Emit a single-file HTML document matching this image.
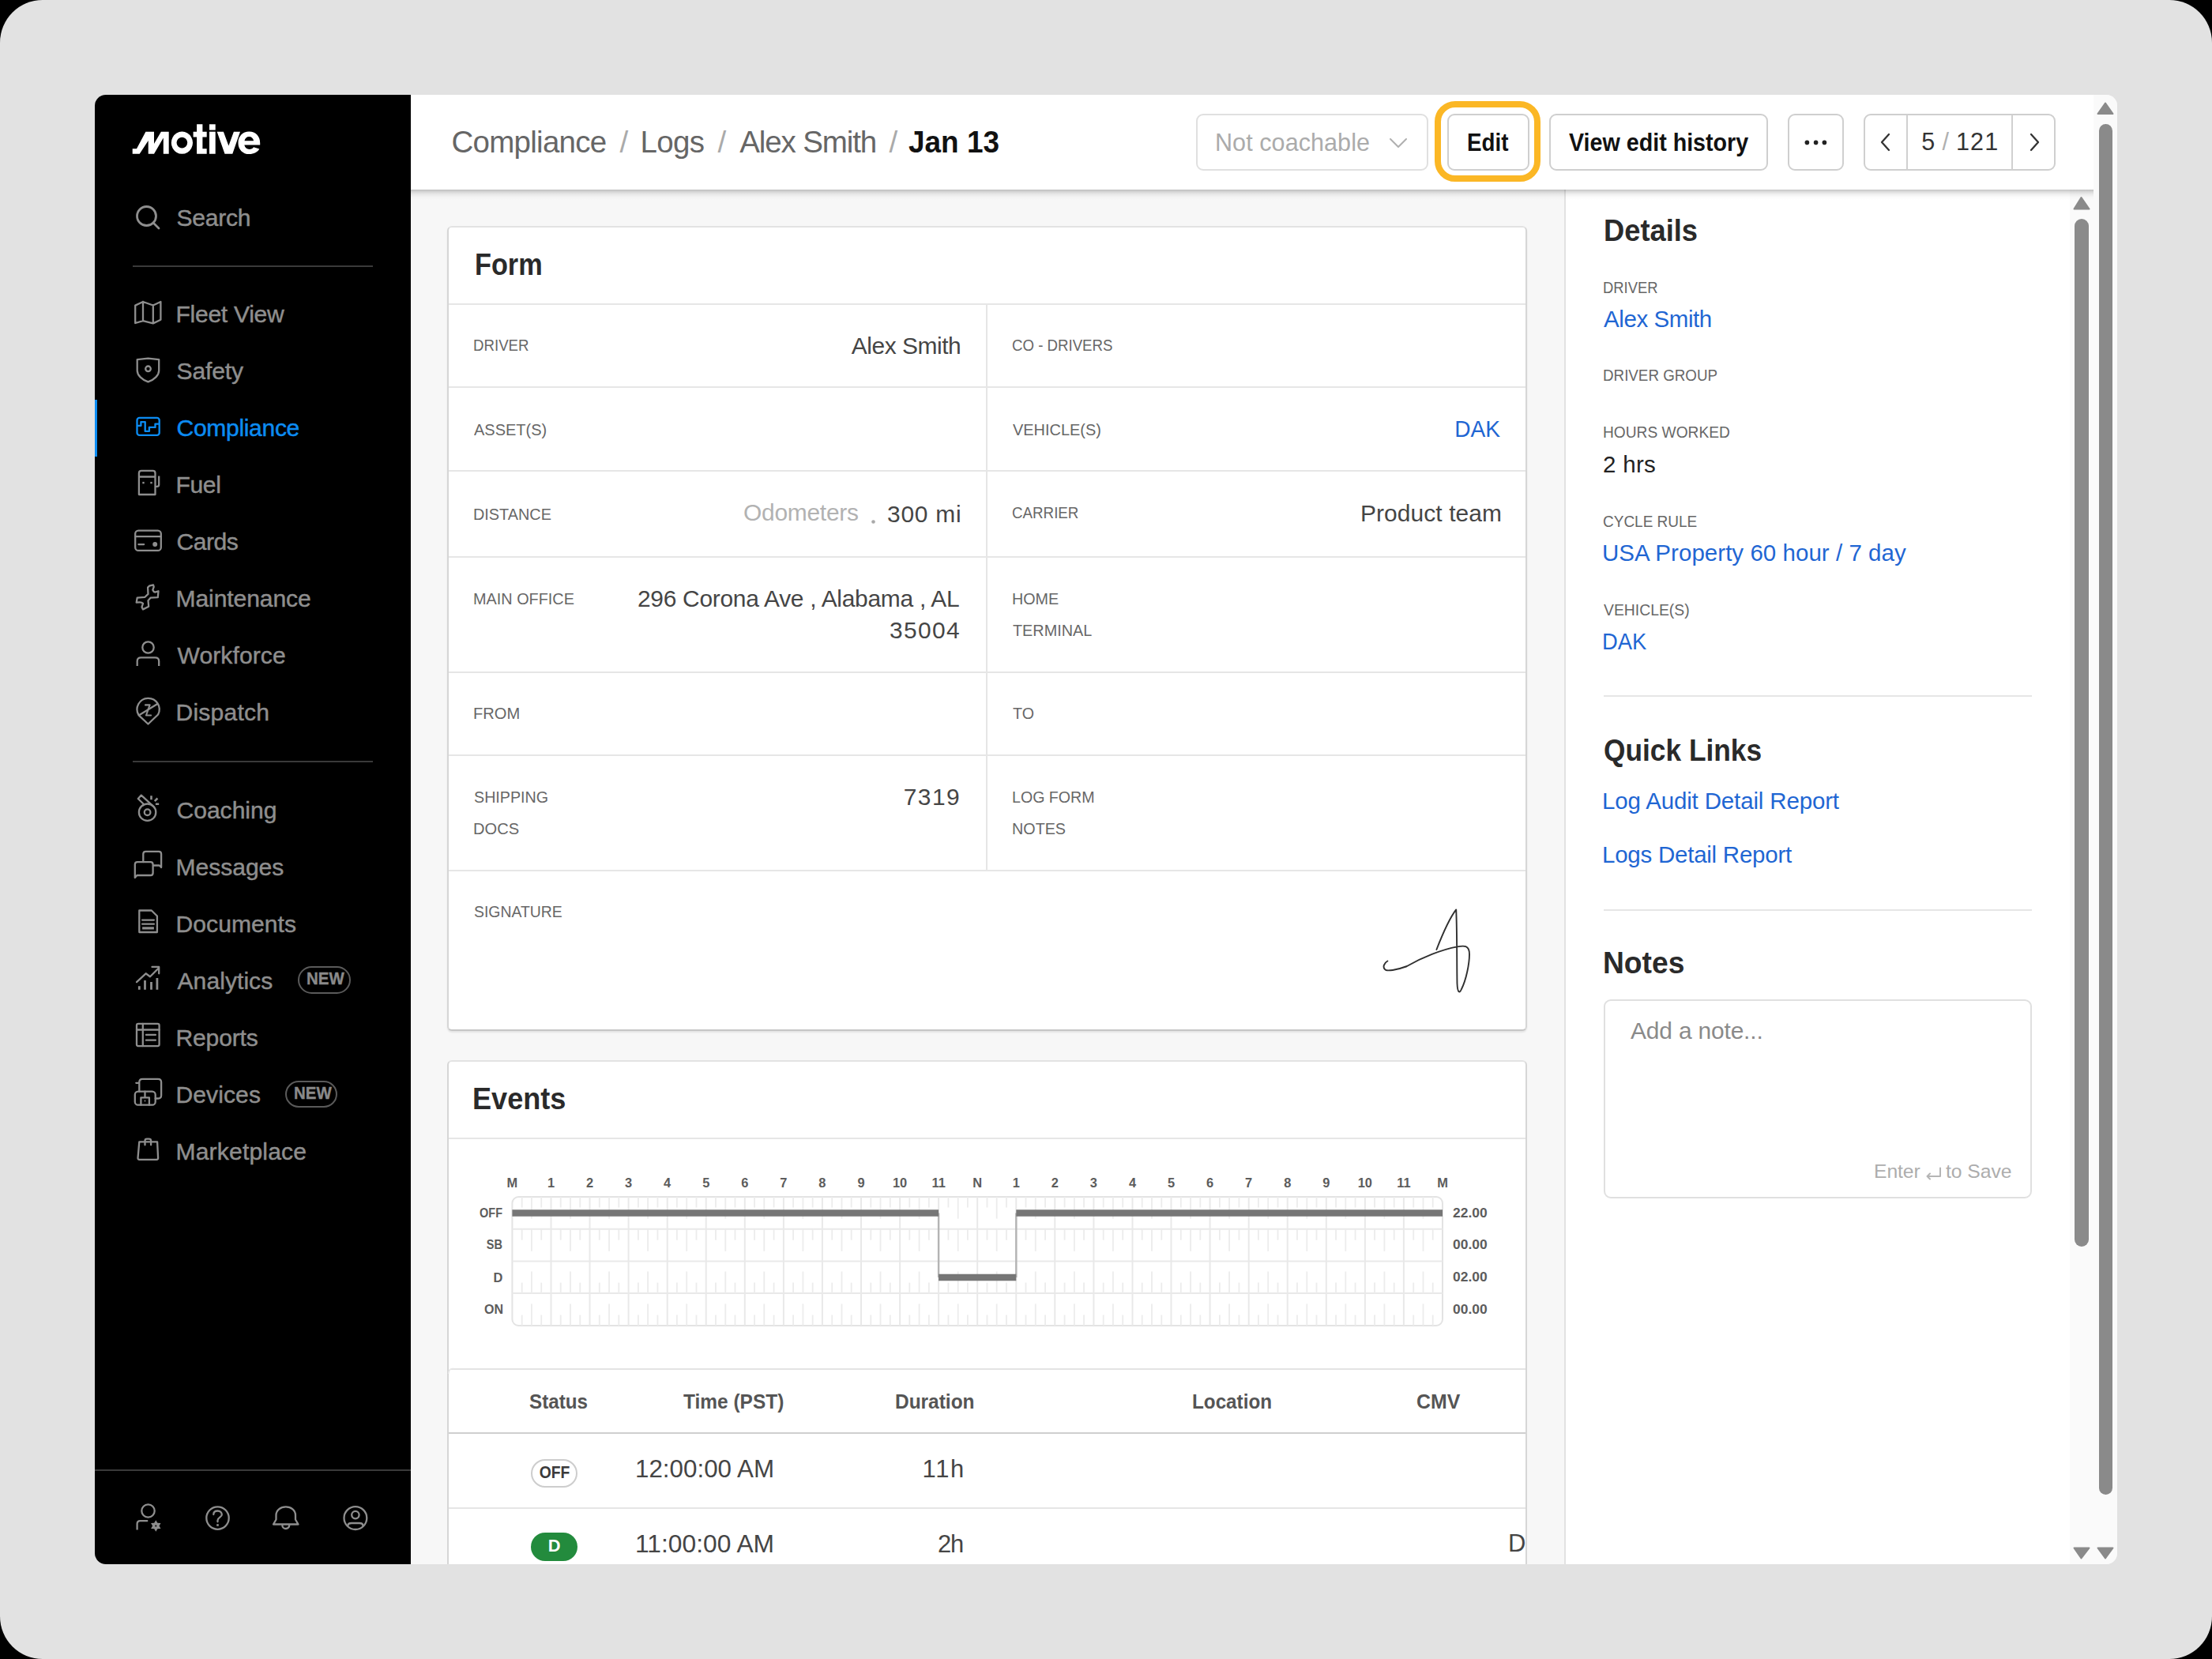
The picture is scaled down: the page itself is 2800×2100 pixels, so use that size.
<!DOCTYPE html><html><head><meta charset="utf-8"><style>html,body{margin:0;padding:0;background:#000;width:2800px;height:2100px;overflow:hidden;font-family:"Liberation Sans", sans-serif}</style></head><body>
<div style="position:absolute;left:0;top:0;width:2800px;height:2100px;background:#e2e2e2;border-radius:54px"></div>
<div style="position:absolute;left:120px;top:120px;width:2560px;height:1860px;border-radius:14px;overflow:hidden;background:#f7f7f7">
<div style="position:absolute;left:-120px;top:-120px;width:2800px;height:2100px">
<div style="position:absolute;left:120.0px;top:120.0px;width:400.0px;height:1860.0px;background:#000"></div>
<div style="position:absolute;left:520.0px;top:240.0px;width:1460.0px;height:1740.0px;background:#f7f7f7"></div>
<div style="position:absolute;left:1980.0px;top:240.0px;width:640.0px;height:1740.0px;background:#fff;border-left:2px solid #e2e2e2;box-sizing:border-box"></div>
<div style="position:absolute;left:2620.0px;top:240.0px;width:30.0px;height:1740.0px;background:#fafafa"></div>
<div style="position:absolute;left:2650.0px;top:120.0px;width:30.0px;height:1860.0px;background:#fafafa"></div>
<div style="position:absolute;left:520.0px;top:120.0px;width:2130.0px;height:120.0px;background:#fff"></div>
<div style="position:absolute;left:520.0px;top:240.0px;width:2130.0px;height:13.0px;background:linear-gradient(to bottom, rgba(0,0,0,0.24) 0px, rgba(0,0,0,0.16) 2px, rgba(0,0,0,0.10) 4px, rgba(0,0,0,0.05) 6.5px, rgba(0,0,0,0.015) 9.5px, rgba(0,0,0,0) 13px)"></div>
<svg style="position:absolute;left:0;top:0" width="400" height="260" viewBox="0 0 400 260"><path fill="#fff" d="M167.7,194.75 L167.7,188.2 L173.0,188.2 L184.4,166.7 L195.0,166.7 L195.0,182.1 L203.9,166.7 L213.7,166.7 L213.7,194.75 L206.8,194.75 L206.8,174.4 L195.0,194.75 L187.7,194.75 L187.7,177.9 L176.7,194.75 Z"/><path fill="#fff" fill-rule="evenodd" d="M230.4,166.6 A13.6,14.1 0 1,0 230.41,166.6 Z M230.4,173.7 A6.8,6.9 0 1,1 230.39,173.7 Z"/><path fill="#fff" d="M249.1,157.3 L256.4,157.3 L256.4,166.7 L261.7,166.7 L261.7,173.6 L256.4,173.6 L256.4,188.2 L261.7,188.2 L261.7,194.75 L249.1,194.75 L249.1,173.6 L244.6,173.6 L244.6,166.7 L249.1,166.7 Z"/><rect fill="#fff" x="265" y="157.3" width="7.7" height="7.3"/><rect fill="#fff" x="265" y="166.7" width="7.7" height="28.05"/><path fill="#fff" d="M274.7,166.7 L282.9,166.7 L289.4,184.6 L295.9,166.7 L304.0,166.7 L294.3,194.75 L284.5,194.75 Z"/><path fill="#fff" fill-rule="evenodd" d="M315.3,166.6 C323.6,166.6 329.2,172.6 329.2,181.0 L329.2,183.6 L309.3,183.6 C310.0,187.0 312.6,189.0 315.6,189.0 C318.0,189.0 319.9,188.0 321.0,186.3 L328.3,188.6 C326.2,192.6 321.3,195.1 315.5,195.1 C307.3,195.1 301.5,189.1 301.5,180.9 C301.5,172.6 307.3,166.6 315.3,166.6 Z M309.5,178.2 L321.1,178.2 C320.5,175.1 318.3,173.1 315.3,173.1 C312.3,173.1 310.2,175.1 309.5,178.2 Z"/></svg>
<svg style="position:absolute;left:160.0px;top:250.0px;" width="50" height="50" viewBox="0 0 50 50" fill="none"><circle cx="25.5" cy="23.5" r="12" stroke="#8e8e8e" stroke-width="2.8"/><path d="M34 32 L41 39" stroke="#8e8e8e" stroke-width="2.8" stroke-linecap="round"/></svg>
<div style="position:absolute;left:167.5px;top:335.5px;width:304.5px;height:2.0px;background:#3a3a3a"></div>
<div style="position:absolute;left:167.5px;top:962.8px;width:304.5px;height:2.0px;background:#3a3a3a"></div>
<div style="position:absolute;left:120.0px;top:506.0px;width:3.0px;height:72.0px;background:#0c8cf2"></div>
<div style="position:absolute;left:377.0px;top:1223.0px;width:67.0px;height:35.0px;border:2px solid #5a5a5a;border-radius:18px;box-sizing:border-box"></div>
<div style="position:absolute;left:361.4px;top:1367.7px;width:66.0px;height:34.0px;border:2px solid #5a5a5a;border-radius:18px;box-sizing:border-box"></div>
<svg style="position:absolute;left:0;top:0" width="600" height="2000" viewBox="0 0 600 2000" fill="none"><g stroke="#8e8e8e" stroke-width="2.3" stroke-linejoin="round" stroke-linecap="round" fill="none"><path d="M171.2,386.6 L181,382 L193.8,386.5 L203.4,382 L203.4,404.7 L193.8,409.4 L181,406.2 L171.2,409 Z M181,382 L181,406.2 M193.8,386.5 L193.8,409.4"/><path d="M187.5,453.6 L201.2,455.2 L201.2,469 C201.2,475 195.5,480.5 187.5,483.4 C179.5,480.5 173.7,475 173.7,469 L173.7,455.2 Z"/><circle cx="187.5" cy="466.8" r="3.3"/><path d="M175.9,626 L175.9,598.9 C175.9,597 177,595.9 179,595.9 L193.5,595.9 C195.5,595.9 196.5,597 196.5,598.9 L196.5,626 Z M175.9,603.5 L196.5,603.5 M196.5,615.8 L199,615.8 C200.5,615.8 201.2,615 201.2,613.5 L201.2,602.4" stroke-linecap="butt"/><rect x="180.3" y="609.9" width="2.4" height="2.4" fill="#8e8e8e" stroke="none"/><rect x="190.3" y="609.9" width="2.4" height="2.4" fill="#8e8e8e" stroke="none"/><rect x="171.2" y="671.6" width="32.6" height="25.3" rx="4"/><path d="M171.2,679.1 L203.8,679.1 M175.4,689.1 L182.2,689.1"/><circle cx="196.2" cy="689.1" r="3" fill="#8e8e8e" stroke="none"/><path d="M194,740.3 L194.7,742.8 L193.3,746.8 C194,748.5 195,749.5 196.2,749.7 L200.5,748.3 L199.8,756.2 L190.7,756.6 L187.5,760.2 L188.2,767.8 L181,771.4 L179.5,768.5 L181,763.8 C180,762.8 178.5,762.3 176.6,762.4 L172.7,762.7 L173.7,756.6 L183.5,755.8 L187.5,751.9 L187.1,743.6 L188.9,741.7 Z"/><circle cx="187.5" cy="819.5" r="7.2"/><path d="M173.7,843 L173.7,837 C173.7,834 175.5,832.4 178.5,832.4 L196.4,832.4 C199.4,832.4 201.2,834 201.2,837 L201.2,843" stroke-linecap="butt"/><path d="M187.5,916.5 L175.6,905.3 A14.1,14.1 0 1,1 200.1,904.5 Z M176.5,905.1 L198.5,891.5"/><path d="M184,892.4 L189.6,892.4 L185,905.5 L191.1,905.5" stroke-width="2.1"/><circle cx="186.6" cy="1028.2" r="10.7"/><circle cx="186.6" cy="1028.2" r="3.8"/><path d="M181.5,1019.3 L182,1018 L174.8,1011 L178.8,1006.6 L194.4,1021"/><path d="M191.5,1007.2 L191.5,1012.3 M195.8,1014.1 L199.4,1010.5 M196.9,1017.7 L201.2,1017.7" stroke-width="2.6" stroke-linecap="butt"/><path d="M181.3,1091.1 L181.3,1080.9 C181.3,1078.8 182.3,1077.8 184.5,1077.8 L201,1077.8 C203.1,1077.8 204.1,1078.8 204.1,1080.9 L204.1,1098 L201.8,1095.5 L194.4,1095.5"/><path d="M170.8,1111 L170.8,1094.2 C170.8,1092.1 171.8,1091.1 173.9,1091.1 L190.5,1091.1 C192.6,1091.1 193.6,1092.1 193.6,1094.2 L193.6,1104.9 C193.6,1107 192.6,1108 190.5,1108 L173.4,1108 Z"/><path d="M176.3,1180 L176.3,1152.5 L191.8,1152.5 L198.9,1159.5 L198.9,1180 Z M180.1,1164.6 L194.9,1164.6 M180.1,1169.7 L194.9,1169.7"/><path d="M180.1,1174.9 L194.9,1174.9" stroke-width="3.2" stroke-linecap="butt"/><path d="M173,1243.1 L184.6,1232.3 L190,1236.2 L200.9,1225.4 M192.5,1223.9 L201.2,1223.9 L201.2,1232.3"/><path d="M176.3,1248.2 L176.3,1252.8 M183.5,1240.9 L183.5,1252.8 M191.5,1243.1 L191.5,1252.8 M198.9,1238 L198.9,1252.8" stroke-width="2.8" stroke-linecap="butt"/><rect x="173" y="1295.9" width="28.6" height="28.2" rx="2"/><path d="M173,1303.5 L201.6,1303.5 M180.8,1295.9 L180.8,1324.1 M185,1309.9 L196.9,1309.9 M185,1316.7 L196.9,1316.7"/><path d="M172.3,1370.8 L176.3,1370.8 M176.3,1381.7 L176.3,1369.8 C176.3,1367.3 177.8,1365.8 180.3,1365.8 L200.1,1365.8 C202.6,1365.8 204.1,1367.3 204.1,1369.8 L204.1,1386.5 C204.1,1389 202.6,1390.5 200.1,1390.5 L196.7,1390.5"/><rect x="170.8" y="1381.7" width="25.9" height="17" rx="4"/><path d="M178.4,1398.7 L178.4,1389.3 L188.9,1389.3 L188.9,1398.7 M183.5,1381.7 L183.5,1389.3"/><circle cx="183.5" cy="1393.5" r="0.9" fill="#8e8e8e" stroke="none"/><path d="M176.3,1445.4 L199.1,1445.4 L200.1,1465.8 C200.1,1467 199.4,1467.8 198.3,1467.8 L176.3,1467.8 C175.2,1467.8 174.5,1467 174.5,1465.8 Z M183.5,1449.3 L183.5,1444 C183.5,1442.5 184.5,1441.7 186,1441.7 L188.6,1441.7 C190.1,1441.7 191.1,1442.5 191.1,1444 L191.1,1449.3"/></g><g stroke="#0c8cf2" stroke-width="2.35" stroke-linejoin="round" fill="none"><rect x="173.5" y="528.9" width="28.2" height="22" rx="3"/><path d="M173.5,538.8 L178.4,538.8 L178.4,534.1 L183.7,534.1 L183.7,545.8 L188.9,545.8 L188.9,540.9 L196.5,540.9 L196.5,536.6 L201.7,536.6"/></g></svg>
<div style="position:absolute;left:120.0px;top:1860.0px;width:400.0px;height:2.0px;background:#3a3a3a"></div>
<svg style="position:absolute;left:0;top:0" width="600" height="2000" viewBox="0 0 600 2000" fill="none"><g stroke="#8e8e8e" stroke-width="2.3" stroke-linecap="round" stroke-linejoin="round" fill="none"><circle cx="187.5" cy="1912.5" r="8.2"/><path d="M173.6,1936.5 L173.6,1929 C173.6,1926.5 175,1925.1 177.5,1925.1 L187.2,1925.1" stroke-linecap="butt"/><circle cx="197.3" cy="1931.5" r="2.2"/></g><path fill-rule="evenodd" fill="#8e8e8e" d="M197.30,1924.30 L195.20,1927.86 L191.06,1927.90 L193.10,1931.50 L191.06,1935.10 L195.20,1935.14 L197.30,1938.70 L199.40,1935.14 L203.54,1935.10 L201.50,1931.50 L203.54,1927.90 L199.40,1927.86 Z M199.3,1931.5 A2,2 0 1,0 195.3,1931.5 A2,2 0 1,0 199.3,1931.5 Z"/><g stroke="#8e8e8e" stroke-width="2.3" stroke-linecap="round" stroke-linejoin="round" fill="none"><circle cx="275.5" cy="1921.6" r="14.2"/><path d="M270.3,1917 C270.3,1914.2 272.5,1912.5 275.5,1912.5 C278.7,1912.5 280.8,1914.5 280.8,1917.2 C280.8,1920.5 275.5,1920.8 275.5,1924.5 L275.5,1926.3"/><path d="M346,1929.5 L349.5,1923.5 L349.5,1918 C349.5,1911.5 355,1907.4 361.8,1907.4 C368.6,1907.4 374,1911.5 374,1918 L374,1923.5 L377.5,1929.5 Z M357.3,1930.5 A4.5,4.5 0 0,0 366.3,1930.5"/><circle cx="449.9" cy="1921.6" r="14.4"/><circle cx="449.9" cy="1917.6" r="4.7"/><path d="M440.5,1931 C440.5,1929 442.5,1928 445,1928 L455,1928 C457.5,1928 459.3,1929 459.3,1931"/></g><rect x="274.2" y="1929.2" width="2.6" height="2.6" fill="#8e8e8e"/></svg>
<div style="position:absolute;left:1514.0px;top:144.0px;width:294.0px;height:72.0px;background:#fff;border:2px solid #e0e0e0;border-radius:9px;box-sizing:border-box"></div>
<svg style="position:absolute;left:1755.0px;top:170.0px;" width="30" height="24" viewBox="0 0 30 24" fill="none"><path d="M5,6 L15,16 L25,6" stroke="#b0b0b0" stroke-width="2" stroke-linecap="round" stroke-linejoin="round"/></svg>
<div style="position:absolute;left:1832.0px;top:144.0px;width:104.0px;height:72.0px;background:#fff;border:2px solid #cfcfcf;border-radius:9px;box-sizing:border-box"></div>
<div style="position:absolute;left:1816.0px;top:128.0px;width:134.0px;height:102.0px;border:8px solid #fbb725;border-radius:26px;box-sizing:border-box"></div>
<div style="position:absolute;left:1961.0px;top:144.0px;width:277.0px;height:72.0px;background:#fff;border:2px solid #cfcfcf;border-radius:9px;box-sizing:border-box"></div>
<div style="position:absolute;left:2263.0px;top:144.0px;width:71.0px;height:72.0px;background:#fff;border:2px solid #cfcfcf;border-radius:9px;box-sizing:border-box"></div>
<svg style="position:absolute;left:2270.0px;top:170.0px;" width="60" height="20" viewBox="0 0 60 20" fill="none"><circle cx="17.4" cy="10.4" r="2.8" fill="#222"/><circle cx="28.6" cy="10.4" r="2.8" fill="#222"/><circle cx="39.4" cy="10.4" r="2.8" fill="#222"/></svg>
<div style="position:absolute;left:2359.0px;top:144.0px;width:243.0px;height:72.0px;background:#fff;border:2px solid #cfcfcf;border-radius:9px;box-sizing:border-box"></div>
<div style="position:absolute;left:2413.0px;top:145.0px;width:2.0px;height:70.0px;background:#d0d0d0"></div>
<div style="position:absolute;left:2546.0px;top:145.0px;width:2.0px;height:70.0px;background:#d0d0d0"></div>
<svg style="position:absolute;left:2375.0px;top:165.0px;" width="30" height="30" viewBox="0 0 30 30" fill="none"><path d="M16,5 L7,15 L16,25" stroke="#333" stroke-width="2.3" stroke-linecap="round" stroke-linejoin="round"/></svg>
<svg style="position:absolute;left:2562.0px;top:165.0px;" width="30" height="30" viewBox="0 0 30 30" fill="none"><path d="M9,5 L18,15 L9,25" stroke="#333" stroke-width="2.3" stroke-linecap="round" stroke-linejoin="round"/></svg>
<svg style="position:absolute;left:2620.0px;top:240.0px;" width="30" height="40" viewBox="0 0 30 40" fill="none"><path d="M5.5,24.5 L14.5,10 L24.5,24.5 Z" fill="#8a8a8a" stroke="#8a8a8a" stroke-width="2" stroke-linejoin="round"/></svg>
<div style="position:absolute;left:2626.0px;top:277.0px;width:18.0px;height:1301.0px;background:#8a8a8a;border-radius:9px"></div>
<svg style="position:absolute;left:2620.0px;top:1950.0px;" width="30" height="30" viewBox="0 0 30 30" fill="none"><path d="M5.5,9.5 L14.5,22.5 L24.5,9.5 Z" fill="#8a8a8a" stroke="#8a8a8a" stroke-width="2" stroke-linejoin="round"/></svg>
<svg style="position:absolute;left:2650.0px;top:120.0px;" width="30" height="40" viewBox="0 0 30 40" fill="none"><path d="M5.5,24 L15,10.5 L24.5,24 Z" fill="#8a8a8a" stroke="#8a8a8a" stroke-width="2" stroke-linejoin="round"/></svg>
<div style="position:absolute;left:2656.5px;top:157.0px;width:17.5px;height:1735.0px;background:#8a8a8a;border-radius:9px"></div>
<svg style="position:absolute;left:2650.0px;top:1950.0px;" width="30" height="30" viewBox="0 0 30 30" fill="none"><path d="M5.5,9.5 L15,22.5 L24.5,9.5 Z" fill="#8a8a8a" stroke="#8a8a8a" stroke-width="2" stroke-linejoin="round"/></svg>
<div style="position:absolute;left:565.5px;top:286.0px;width:1367.0px;height:1019.0px;background:#fff;border:2px solid #d6d6d6;border-top-color:#e3e3e3;border-bottom-color:#c6c6c6;border-radius:6px;box-sizing:border-box;box-shadow:0 2px 2px rgba(0,0,0,0.08)"></div>
<div style="position:absolute;left:568.0px;top:384.0px;width:1363.0px;height:2.0px;background:#e6e6e6"></div>
<div style="position:absolute;left:568.0px;top:489.0px;width:1363.0px;height:2.0px;background:#e6e6e6"></div>
<div style="position:absolute;left:568.0px;top:595.0px;width:1363.0px;height:2.0px;background:#e6e6e6"></div>
<div style="position:absolute;left:568.0px;top:704.0px;width:1363.0px;height:2.0px;background:#e6e6e6"></div>
<div style="position:absolute;left:568.0px;top:850.0px;width:1363.0px;height:2.0px;background:#e6e6e6"></div>
<div style="position:absolute;left:568.0px;top:955.0px;width:1363.0px;height:2.0px;background:#e6e6e6"></div>
<div style="position:absolute;left:568.0px;top:1101.0px;width:1363.0px;height:2.0px;background:#e6e6e6"></div>
<div style="position:absolute;left:1247.5px;top:385.0px;width:2.0px;height:717.0px;background:#e6e6e6"></div>
<svg style="position:absolute;left:1098.0px;top:654.0px;" width="15" height="15" viewBox="0 0 15 15" fill="none"><circle cx="7.5" cy="6.5" r="2.3" fill="#a9a9a9"/></svg>
<svg style="position:absolute;left:1740.0px;top:1140.0px;" width="130" height="125" viewBox="0 0 130 125" fill="none"><path d="M78.4,62 C85,45 95,22 103.2,11.4 C104.5,40 104,80 104.5,105 C105,118 108,117 110,112 C116,100 120,80 120,68 C120,56 113,57 104.7,58.4 C85,62 60,72 41,83 C28,88 15,90 13,87 C10,84 12,79 16.4,76.5" stroke="#2f2f2f" stroke-width="1.9" stroke-linecap="round" stroke-linejoin="round"/></svg>
<div style="position:absolute;left:565.5px;top:1342.0px;width:1367.0px;height:698.0px;background:#fff;border:2px solid #d6d6d6;border-top-color:#e3e3e3;border-radius:6px;box-sizing:border-box"></div>
<div style="position:absolute;left:568.0px;top:1440.0px;width:1363.0px;height:2.0px;background:#e6e6e6"></div>
<svg style="position:absolute;left:0;top:0" width="2000" height="2000" viewBox="0 0 2000 2000" fill="none"><rect x="648.4" y="1515.0" width="1177.6" height="163.0" rx="8" stroke="#e3e3e3" stroke-width="2"/><path d="M648.4,1555.7 L1826.0,1555.7" stroke="#e9e9e9" stroke-width="2"/><path d="M648.4,1596.4 L1826.0,1596.4" stroke="#e9e9e9" stroke-width="2"/><path d="M648.4,1637.1 L1826.0,1637.1" stroke="#e9e9e9" stroke-width="2"/><path d="M697.5,1515.0 L697.5,1678.0" stroke="#e9e9e9" stroke-width="2"/><path d="M746.5,1515.0 L746.5,1678.0" stroke="#e9e9e9" stroke-width="2"/><path d="M795.6,1515.0 L795.6,1678.0" stroke="#e9e9e9" stroke-width="2"/><path d="M844.7,1515.0 L844.7,1678.0" stroke="#e9e9e9" stroke-width="2"/><path d="M893.7,1515.0 L893.7,1678.0" stroke="#e9e9e9" stroke-width="2"/><path d="M942.8,1515.0 L942.8,1678.0" stroke="#e9e9e9" stroke-width="2"/><path d="M991.9,1515.0 L991.9,1678.0" stroke="#e9e9e9" stroke-width="2"/><path d="M1040.9,1515.0 L1040.9,1678.0" stroke="#e9e9e9" stroke-width="2"/><path d="M1090.0,1515.0 L1090.0,1678.0" stroke="#e9e9e9" stroke-width="2"/><path d="M1139.1,1515.0 L1139.1,1678.0" stroke="#e9e9e9" stroke-width="2"/><path d="M1188.1,1515.0 L1188.1,1678.0" stroke="#e9e9e9" stroke-width="2"/><path d="M1237.2,1515.0 L1237.2,1678.0" stroke="#e9e9e9" stroke-width="2"/><path d="M1286.3,1515.0 L1286.3,1678.0" stroke="#e9e9e9" stroke-width="2"/><path d="M1335.3,1515.0 L1335.3,1678.0" stroke="#e9e9e9" stroke-width="2"/><path d="M1384.4,1515.0 L1384.4,1678.0" stroke="#e9e9e9" stroke-width="2"/><path d="M1433.5,1515.0 L1433.5,1678.0" stroke="#e9e9e9" stroke-width="2"/><path d="M1482.5,1515.0 L1482.5,1678.0" stroke="#e9e9e9" stroke-width="2"/><path d="M1531.6,1515.0 L1531.6,1678.0" stroke="#e9e9e9" stroke-width="2"/><path d="M1580.7,1515.0 L1580.7,1678.0" stroke="#e9e9e9" stroke-width="2"/><path d="M1629.7,1515.0 L1629.7,1678.0" stroke="#e9e9e9" stroke-width="2"/><path d="M1678.8,1515.0 L1678.8,1678.0" stroke="#e9e9e9" stroke-width="2"/><path d="M1727.9,1515.0 L1727.9,1678.0" stroke="#e9e9e9" stroke-width="2"/><path d="M1776.9,1515.0 L1776.9,1678.0" stroke="#e9e9e9" stroke-width="2"/><path d="M660.7,1515.0 L660.7,1528.5" stroke="#ececec" stroke-width="1.8"/><path d="M660.7,1555.7 L660.7,1569.7" stroke="#ececec" stroke-width="1.8"/><path d="M660.7,1623.6 L660.7,1637.1" stroke="#ececec" stroke-width="1.8"/><path d="M660.7,1664.5 L660.7,1678.0" stroke="#ececec" stroke-width="1.8"/><path d="M672.9,1515.0 L672.9,1542.6" stroke="#ececec" stroke-width="1.8"/><path d="M672.9,1555.7 L672.9,1583.8" stroke="#ececec" stroke-width="1.8"/><path d="M672.9,1609.5 L672.9,1637.1" stroke="#ececec" stroke-width="1.8"/><path d="M672.9,1650.4 L672.9,1678.0" stroke="#ececec" stroke-width="1.8"/><path d="M685.2,1515.0 L685.2,1528.5" stroke="#ececec" stroke-width="1.8"/><path d="M685.2,1555.7 L685.2,1569.7" stroke="#ececec" stroke-width="1.8"/><path d="M685.2,1623.6 L685.2,1637.1" stroke="#ececec" stroke-width="1.8"/><path d="M685.2,1664.5 L685.2,1678.0" stroke="#ececec" stroke-width="1.8"/><path d="M709.7,1515.0 L709.7,1528.5" stroke="#ececec" stroke-width="1.8"/><path d="M709.7,1555.7 L709.7,1569.7" stroke="#ececec" stroke-width="1.8"/><path d="M709.7,1623.6 L709.7,1637.1" stroke="#ececec" stroke-width="1.8"/><path d="M709.7,1664.5 L709.7,1678.0" stroke="#ececec" stroke-width="1.8"/><path d="M722.0,1515.0 L722.0,1542.6" stroke="#ececec" stroke-width="1.8"/><path d="M722.0,1555.7 L722.0,1583.8" stroke="#ececec" stroke-width="1.8"/><path d="M722.0,1609.5 L722.0,1637.1" stroke="#ececec" stroke-width="1.8"/><path d="M722.0,1650.4 L722.0,1678.0" stroke="#ececec" stroke-width="1.8"/><path d="M734.3,1515.0 L734.3,1528.5" stroke="#ececec" stroke-width="1.8"/><path d="M734.3,1555.7 L734.3,1569.7" stroke="#ececec" stroke-width="1.8"/><path d="M734.3,1623.6 L734.3,1637.1" stroke="#ececec" stroke-width="1.8"/><path d="M734.3,1664.5 L734.3,1678.0" stroke="#ececec" stroke-width="1.8"/><path d="M758.8,1515.0 L758.8,1528.5" stroke="#ececec" stroke-width="1.8"/><path d="M758.8,1555.7 L758.8,1569.7" stroke="#ececec" stroke-width="1.8"/><path d="M758.8,1623.6 L758.8,1637.1" stroke="#ececec" stroke-width="1.8"/><path d="M758.8,1664.5 L758.8,1678.0" stroke="#ececec" stroke-width="1.8"/><path d="M771.1,1515.0 L771.1,1542.6" stroke="#ececec" stroke-width="1.8"/><path d="M771.1,1555.7 L771.1,1583.8" stroke="#ececec" stroke-width="1.8"/><path d="M771.1,1609.5 L771.1,1637.1" stroke="#ececec" stroke-width="1.8"/><path d="M771.1,1650.4 L771.1,1678.0" stroke="#ececec" stroke-width="1.8"/><path d="M783.3,1515.0 L783.3,1528.5" stroke="#ececec" stroke-width="1.8"/><path d="M783.3,1555.7 L783.3,1569.7" stroke="#ececec" stroke-width="1.8"/><path d="M783.3,1623.6 L783.3,1637.1" stroke="#ececec" stroke-width="1.8"/><path d="M783.3,1664.5 L783.3,1678.0" stroke="#ececec" stroke-width="1.8"/><path d="M807.9,1515.0 L807.9,1528.5" stroke="#ececec" stroke-width="1.8"/><path d="M807.9,1555.7 L807.9,1569.7" stroke="#ececec" stroke-width="1.8"/><path d="M807.9,1623.6 L807.9,1637.1" stroke="#ececec" stroke-width="1.8"/><path d="M807.9,1664.5 L807.9,1678.0" stroke="#ececec" stroke-width="1.8"/><path d="M820.1,1515.0 L820.1,1542.6" stroke="#ececec" stroke-width="1.8"/><path d="M820.1,1555.7 L820.1,1583.8" stroke="#ececec" stroke-width="1.8"/><path d="M820.1,1609.5 L820.1,1637.1" stroke="#ececec" stroke-width="1.8"/><path d="M820.1,1650.4 L820.1,1678.0" stroke="#ececec" stroke-width="1.8"/><path d="M832.4,1515.0 L832.4,1528.5" stroke="#ececec" stroke-width="1.8"/><path d="M832.4,1555.7 L832.4,1569.7" stroke="#ececec" stroke-width="1.8"/><path d="M832.4,1623.6 L832.4,1637.1" stroke="#ececec" stroke-width="1.8"/><path d="M832.4,1664.5 L832.4,1678.0" stroke="#ececec" stroke-width="1.8"/><path d="M856.9,1515.0 L856.9,1528.5" stroke="#ececec" stroke-width="1.8"/><path d="M856.9,1555.7 L856.9,1569.7" stroke="#ececec" stroke-width="1.8"/><path d="M856.9,1623.6 L856.9,1637.1" stroke="#ececec" stroke-width="1.8"/><path d="M856.9,1664.5 L856.9,1678.0" stroke="#ececec" stroke-width="1.8"/><path d="M869.2,1515.0 L869.2,1542.6" stroke="#ececec" stroke-width="1.8"/><path d="M869.2,1555.7 L869.2,1583.8" stroke="#ececec" stroke-width="1.8"/><path d="M869.2,1609.5 L869.2,1637.1" stroke="#ececec" stroke-width="1.8"/><path d="M869.2,1650.4 L869.2,1678.0" stroke="#ececec" stroke-width="1.8"/><path d="M881.5,1515.0 L881.5,1528.5" stroke="#ececec" stroke-width="1.8"/><path d="M881.5,1555.7 L881.5,1569.7" stroke="#ececec" stroke-width="1.8"/><path d="M881.5,1623.6 L881.5,1637.1" stroke="#ececec" stroke-width="1.8"/><path d="M881.5,1664.5 L881.5,1678.0" stroke="#ececec" stroke-width="1.8"/><path d="M906.0,1515.0 L906.0,1528.5" stroke="#ececec" stroke-width="1.8"/><path d="M906.0,1555.7 L906.0,1569.7" stroke="#ececec" stroke-width="1.8"/><path d="M906.0,1623.6 L906.0,1637.1" stroke="#ececec" stroke-width="1.8"/><path d="M906.0,1664.5 L906.0,1678.0" stroke="#ececec" stroke-width="1.8"/><path d="M918.3,1515.0 L918.3,1542.6" stroke="#ececec" stroke-width="1.8"/><path d="M918.3,1555.7 L918.3,1583.8" stroke="#ececec" stroke-width="1.8"/><path d="M918.3,1609.5 L918.3,1637.1" stroke="#ececec" stroke-width="1.8"/><path d="M918.3,1650.4 L918.3,1678.0" stroke="#ececec" stroke-width="1.8"/><path d="M930.5,1515.0 L930.5,1528.5" stroke="#ececec" stroke-width="1.8"/><path d="M930.5,1555.7 L930.5,1569.7" stroke="#ececec" stroke-width="1.8"/><path d="M930.5,1623.6 L930.5,1637.1" stroke="#ececec" stroke-width="1.8"/><path d="M930.5,1664.5 L930.5,1678.0" stroke="#ececec" stroke-width="1.8"/><path d="M955.1,1515.0 L955.1,1528.5" stroke="#ececec" stroke-width="1.8"/><path d="M955.1,1555.7 L955.1,1569.7" stroke="#ececec" stroke-width="1.8"/><path d="M955.1,1623.6 L955.1,1637.1" stroke="#ececec" stroke-width="1.8"/><path d="M955.1,1664.5 L955.1,1678.0" stroke="#ececec" stroke-width="1.8"/><path d="M967.3,1515.0 L967.3,1542.6" stroke="#ececec" stroke-width="1.8"/><path d="M967.3,1555.7 L967.3,1583.8" stroke="#ececec" stroke-width="1.8"/><path d="M967.3,1609.5 L967.3,1637.1" stroke="#ececec" stroke-width="1.8"/><path d="M967.3,1650.4 L967.3,1678.0" stroke="#ececec" stroke-width="1.8"/><path d="M979.6,1515.0 L979.6,1528.5" stroke="#ececec" stroke-width="1.8"/><path d="M979.6,1555.7 L979.6,1569.7" stroke="#ececec" stroke-width="1.8"/><path d="M979.6,1623.6 L979.6,1637.1" stroke="#ececec" stroke-width="1.8"/><path d="M979.6,1664.5 L979.6,1678.0" stroke="#ececec" stroke-width="1.8"/><path d="M1004.1,1515.0 L1004.1,1528.5" stroke="#ececec" stroke-width="1.8"/><path d="M1004.1,1555.7 L1004.1,1569.7" stroke="#ececec" stroke-width="1.8"/><path d="M1004.1,1623.6 L1004.1,1637.1" stroke="#ececec" stroke-width="1.8"/><path d="M1004.1,1664.5 L1004.1,1678.0" stroke="#ececec" stroke-width="1.8"/><path d="M1016.4,1515.0 L1016.4,1542.6" stroke="#ececec" stroke-width="1.8"/><path d="M1016.4,1555.7 L1016.4,1583.8" stroke="#ececec" stroke-width="1.8"/><path d="M1016.4,1609.5 L1016.4,1637.1" stroke="#ececec" stroke-width="1.8"/><path d="M1016.4,1650.4 L1016.4,1678.0" stroke="#ececec" stroke-width="1.8"/><path d="M1028.7,1515.0 L1028.7,1528.5" stroke="#ececec" stroke-width="1.8"/><path d="M1028.7,1555.7 L1028.7,1569.7" stroke="#ececec" stroke-width="1.8"/><path d="M1028.7,1623.6 L1028.7,1637.1" stroke="#ececec" stroke-width="1.8"/><path d="M1028.7,1664.5 L1028.7,1678.0" stroke="#ececec" stroke-width="1.8"/><path d="M1053.2,1515.0 L1053.2,1528.5" stroke="#ececec" stroke-width="1.8"/><path d="M1053.2,1555.7 L1053.2,1569.7" stroke="#ececec" stroke-width="1.8"/><path d="M1053.2,1623.6 L1053.2,1637.1" stroke="#ececec" stroke-width="1.8"/><path d="M1053.2,1664.5 L1053.2,1678.0" stroke="#ececec" stroke-width="1.8"/><path d="M1065.5,1515.0 L1065.5,1542.6" stroke="#ececec" stroke-width="1.8"/><path d="M1065.5,1555.7 L1065.5,1583.8" stroke="#ececec" stroke-width="1.8"/><path d="M1065.5,1609.5 L1065.5,1637.1" stroke="#ececec" stroke-width="1.8"/><path d="M1065.5,1650.4 L1065.5,1678.0" stroke="#ececec" stroke-width="1.8"/><path d="M1077.7,1515.0 L1077.7,1528.5" stroke="#ececec" stroke-width="1.8"/><path d="M1077.7,1555.7 L1077.7,1569.7" stroke="#ececec" stroke-width="1.8"/><path d="M1077.7,1623.6 L1077.7,1637.1" stroke="#ececec" stroke-width="1.8"/><path d="M1077.7,1664.5 L1077.7,1678.0" stroke="#ececec" stroke-width="1.8"/><path d="M1102.3,1515.0 L1102.3,1528.5" stroke="#ececec" stroke-width="1.8"/><path d="M1102.3,1555.7 L1102.3,1569.7" stroke="#ececec" stroke-width="1.8"/><path d="M1102.3,1623.6 L1102.3,1637.1" stroke="#ececec" stroke-width="1.8"/><path d="M1102.3,1664.5 L1102.3,1678.0" stroke="#ececec" stroke-width="1.8"/><path d="M1114.5,1515.0 L1114.5,1542.6" stroke="#ececec" stroke-width="1.8"/><path d="M1114.5,1555.7 L1114.5,1583.8" stroke="#ececec" stroke-width="1.8"/><path d="M1114.5,1609.5 L1114.5,1637.1" stroke="#ececec" stroke-width="1.8"/><path d="M1114.5,1650.4 L1114.5,1678.0" stroke="#ececec" stroke-width="1.8"/><path d="M1126.8,1515.0 L1126.8,1528.5" stroke="#ececec" stroke-width="1.8"/><path d="M1126.8,1555.7 L1126.8,1569.7" stroke="#ececec" stroke-width="1.8"/><path d="M1126.8,1623.6 L1126.8,1637.1" stroke="#ececec" stroke-width="1.8"/><path d="M1126.8,1664.5 L1126.8,1678.0" stroke="#ececec" stroke-width="1.8"/><path d="M1151.3,1515.0 L1151.3,1528.5" stroke="#ececec" stroke-width="1.8"/><path d="M1151.3,1555.7 L1151.3,1569.7" stroke="#ececec" stroke-width="1.8"/><path d="M1151.3,1623.6 L1151.3,1637.1" stroke="#ececec" stroke-width="1.8"/><path d="M1151.3,1664.5 L1151.3,1678.0" stroke="#ececec" stroke-width="1.8"/><path d="M1163.6,1515.0 L1163.6,1542.6" stroke="#ececec" stroke-width="1.8"/><path d="M1163.6,1555.7 L1163.6,1583.8" stroke="#ececec" stroke-width="1.8"/><path d="M1163.6,1609.5 L1163.6,1637.1" stroke="#ececec" stroke-width="1.8"/><path d="M1163.6,1650.4 L1163.6,1678.0" stroke="#ececec" stroke-width="1.8"/><path d="M1175.9,1515.0 L1175.9,1528.5" stroke="#ececec" stroke-width="1.8"/><path d="M1175.9,1555.7 L1175.9,1569.7" stroke="#ececec" stroke-width="1.8"/><path d="M1175.9,1623.6 L1175.9,1637.1" stroke="#ececec" stroke-width="1.8"/><path d="M1175.9,1664.5 L1175.9,1678.0" stroke="#ececec" stroke-width="1.8"/><path d="M1200.4,1515.0 L1200.4,1528.5" stroke="#ececec" stroke-width="1.8"/><path d="M1200.4,1555.7 L1200.4,1569.7" stroke="#ececec" stroke-width="1.8"/><path d="M1200.4,1623.6 L1200.4,1637.1" stroke="#ececec" stroke-width="1.8"/><path d="M1200.4,1664.5 L1200.4,1678.0" stroke="#ececec" stroke-width="1.8"/><path d="M1212.7,1515.0 L1212.7,1542.6" stroke="#ececec" stroke-width="1.8"/><path d="M1212.7,1555.7 L1212.7,1583.8" stroke="#ececec" stroke-width="1.8"/><path d="M1212.7,1609.5 L1212.7,1637.1" stroke="#ececec" stroke-width="1.8"/><path d="M1212.7,1650.4 L1212.7,1678.0" stroke="#ececec" stroke-width="1.8"/><path d="M1224.9,1515.0 L1224.9,1528.5" stroke="#ececec" stroke-width="1.8"/><path d="M1224.9,1555.7 L1224.9,1569.7" stroke="#ececec" stroke-width="1.8"/><path d="M1224.9,1623.6 L1224.9,1637.1" stroke="#ececec" stroke-width="1.8"/><path d="M1224.9,1664.5 L1224.9,1678.0" stroke="#ececec" stroke-width="1.8"/><path d="M1249.5,1515.0 L1249.5,1528.5" stroke="#ececec" stroke-width="1.8"/><path d="M1249.5,1555.7 L1249.5,1569.7" stroke="#ececec" stroke-width="1.8"/><path d="M1249.5,1623.6 L1249.5,1637.1" stroke="#ececec" stroke-width="1.8"/><path d="M1249.5,1664.5 L1249.5,1678.0" stroke="#ececec" stroke-width="1.8"/><path d="M1261.7,1515.0 L1261.7,1542.6" stroke="#ececec" stroke-width="1.8"/><path d="M1261.7,1555.7 L1261.7,1583.8" stroke="#ececec" stroke-width="1.8"/><path d="M1261.7,1609.5 L1261.7,1637.1" stroke="#ececec" stroke-width="1.8"/><path d="M1261.7,1650.4 L1261.7,1678.0" stroke="#ececec" stroke-width="1.8"/><path d="M1274.0,1515.0 L1274.0,1528.5" stroke="#ececec" stroke-width="1.8"/><path d="M1274.0,1555.7 L1274.0,1569.7" stroke="#ececec" stroke-width="1.8"/><path d="M1274.0,1623.6 L1274.0,1637.1" stroke="#ececec" stroke-width="1.8"/><path d="M1274.0,1664.5 L1274.0,1678.0" stroke="#ececec" stroke-width="1.8"/><path d="M1298.5,1515.0 L1298.5,1528.5" stroke="#ececec" stroke-width="1.8"/><path d="M1298.5,1555.7 L1298.5,1569.7" stroke="#ececec" stroke-width="1.8"/><path d="M1298.5,1623.6 L1298.5,1637.1" stroke="#ececec" stroke-width="1.8"/><path d="M1298.5,1664.5 L1298.5,1678.0" stroke="#ececec" stroke-width="1.8"/><path d="M1310.8,1515.0 L1310.8,1542.6" stroke="#ececec" stroke-width="1.8"/><path d="M1310.8,1555.7 L1310.8,1583.8" stroke="#ececec" stroke-width="1.8"/><path d="M1310.8,1609.5 L1310.8,1637.1" stroke="#ececec" stroke-width="1.8"/><path d="M1310.8,1650.4 L1310.8,1678.0" stroke="#ececec" stroke-width="1.8"/><path d="M1323.1,1515.0 L1323.1,1528.5" stroke="#ececec" stroke-width="1.8"/><path d="M1323.1,1555.7 L1323.1,1569.7" stroke="#ececec" stroke-width="1.8"/><path d="M1323.1,1623.6 L1323.1,1637.1" stroke="#ececec" stroke-width="1.8"/><path d="M1323.1,1664.5 L1323.1,1678.0" stroke="#ececec" stroke-width="1.8"/><path d="M1347.6,1515.0 L1347.6,1528.5" stroke="#ececec" stroke-width="1.8"/><path d="M1347.6,1555.7 L1347.6,1569.7" stroke="#ececec" stroke-width="1.8"/><path d="M1347.6,1623.6 L1347.6,1637.1" stroke="#ececec" stroke-width="1.8"/><path d="M1347.6,1664.5 L1347.6,1678.0" stroke="#ececec" stroke-width="1.8"/><path d="M1359.9,1515.0 L1359.9,1542.6" stroke="#ececec" stroke-width="1.8"/><path d="M1359.9,1555.7 L1359.9,1583.8" stroke="#ececec" stroke-width="1.8"/><path d="M1359.9,1609.5 L1359.9,1637.1" stroke="#ececec" stroke-width="1.8"/><path d="M1359.9,1650.4 L1359.9,1678.0" stroke="#ececec" stroke-width="1.8"/><path d="M1372.1,1515.0 L1372.1,1528.5" stroke="#ececec" stroke-width="1.8"/><path d="M1372.1,1555.7 L1372.1,1569.7" stroke="#ececec" stroke-width="1.8"/><path d="M1372.1,1623.6 L1372.1,1637.1" stroke="#ececec" stroke-width="1.8"/><path d="M1372.1,1664.5 L1372.1,1678.0" stroke="#ececec" stroke-width="1.8"/><path d="M1396.7,1515.0 L1396.7,1528.5" stroke="#ececec" stroke-width="1.8"/><path d="M1396.7,1555.7 L1396.7,1569.7" stroke="#ececec" stroke-width="1.8"/><path d="M1396.7,1623.6 L1396.7,1637.1" stroke="#ececec" stroke-width="1.8"/><path d="M1396.7,1664.5 L1396.7,1678.0" stroke="#ececec" stroke-width="1.8"/><path d="M1408.9,1515.0 L1408.9,1542.6" stroke="#ececec" stroke-width="1.8"/><path d="M1408.9,1555.7 L1408.9,1583.8" stroke="#ececec" stroke-width="1.8"/><path d="M1408.9,1609.5 L1408.9,1637.1" stroke="#ececec" stroke-width="1.8"/><path d="M1408.9,1650.4 L1408.9,1678.0" stroke="#ececec" stroke-width="1.8"/><path d="M1421.2,1515.0 L1421.2,1528.5" stroke="#ececec" stroke-width="1.8"/><path d="M1421.2,1555.7 L1421.2,1569.7" stroke="#ececec" stroke-width="1.8"/><path d="M1421.2,1623.6 L1421.2,1637.1" stroke="#ececec" stroke-width="1.8"/><path d="M1421.2,1664.5 L1421.2,1678.0" stroke="#ececec" stroke-width="1.8"/><path d="M1445.7,1515.0 L1445.7,1528.5" stroke="#ececec" stroke-width="1.8"/><path d="M1445.7,1555.7 L1445.7,1569.7" stroke="#ececec" stroke-width="1.8"/><path d="M1445.7,1623.6 L1445.7,1637.1" stroke="#ececec" stroke-width="1.8"/><path d="M1445.7,1664.5 L1445.7,1678.0" stroke="#ececec" stroke-width="1.8"/><path d="M1458.0,1515.0 L1458.0,1542.6" stroke="#ececec" stroke-width="1.8"/><path d="M1458.0,1555.7 L1458.0,1583.8" stroke="#ececec" stroke-width="1.8"/><path d="M1458.0,1609.5 L1458.0,1637.1" stroke="#ececec" stroke-width="1.8"/><path d="M1458.0,1650.4 L1458.0,1678.0" stroke="#ececec" stroke-width="1.8"/><path d="M1470.3,1515.0 L1470.3,1528.5" stroke="#ececec" stroke-width="1.8"/><path d="M1470.3,1555.7 L1470.3,1569.7" stroke="#ececec" stroke-width="1.8"/><path d="M1470.3,1623.6 L1470.3,1637.1" stroke="#ececec" stroke-width="1.8"/><path d="M1470.3,1664.5 L1470.3,1678.0" stroke="#ececec" stroke-width="1.8"/><path d="M1494.8,1515.0 L1494.8,1528.5" stroke="#ececec" stroke-width="1.8"/><path d="M1494.8,1555.7 L1494.8,1569.7" stroke="#ececec" stroke-width="1.8"/><path d="M1494.8,1623.6 L1494.8,1637.1" stroke="#ececec" stroke-width="1.8"/><path d="M1494.8,1664.5 L1494.8,1678.0" stroke="#ececec" stroke-width="1.8"/><path d="M1507.1,1515.0 L1507.1,1542.6" stroke="#ececec" stroke-width="1.8"/><path d="M1507.1,1555.7 L1507.1,1583.8" stroke="#ececec" stroke-width="1.8"/><path d="M1507.1,1609.5 L1507.1,1637.1" stroke="#ececec" stroke-width="1.8"/><path d="M1507.1,1650.4 L1507.1,1678.0" stroke="#ececec" stroke-width="1.8"/><path d="M1519.3,1515.0 L1519.3,1528.5" stroke="#ececec" stroke-width="1.8"/><path d="M1519.3,1555.7 L1519.3,1569.7" stroke="#ececec" stroke-width="1.8"/><path d="M1519.3,1623.6 L1519.3,1637.1" stroke="#ececec" stroke-width="1.8"/><path d="M1519.3,1664.5 L1519.3,1678.0" stroke="#ececec" stroke-width="1.8"/><path d="M1543.9,1515.0 L1543.9,1528.5" stroke="#ececec" stroke-width="1.8"/><path d="M1543.9,1555.7 L1543.9,1569.7" stroke="#ececec" stroke-width="1.8"/><path d="M1543.9,1623.6 L1543.9,1637.1" stroke="#ececec" stroke-width="1.8"/><path d="M1543.9,1664.5 L1543.9,1678.0" stroke="#ececec" stroke-width="1.8"/><path d="M1556.1,1515.0 L1556.1,1542.6" stroke="#ececec" stroke-width="1.8"/><path d="M1556.1,1555.7 L1556.1,1583.8" stroke="#ececec" stroke-width="1.8"/><path d="M1556.1,1609.5 L1556.1,1637.1" stroke="#ececec" stroke-width="1.8"/><path d="M1556.1,1650.4 L1556.1,1678.0" stroke="#ececec" stroke-width="1.8"/><path d="M1568.4,1515.0 L1568.4,1528.5" stroke="#ececec" stroke-width="1.8"/><path d="M1568.4,1555.7 L1568.4,1569.7" stroke="#ececec" stroke-width="1.8"/><path d="M1568.4,1623.6 L1568.4,1637.1" stroke="#ececec" stroke-width="1.8"/><path d="M1568.4,1664.5 L1568.4,1678.0" stroke="#ececec" stroke-width="1.8"/><path d="M1592.9,1515.0 L1592.9,1528.5" stroke="#ececec" stroke-width="1.8"/><path d="M1592.9,1555.7 L1592.9,1569.7" stroke="#ececec" stroke-width="1.8"/><path d="M1592.9,1623.6 L1592.9,1637.1" stroke="#ececec" stroke-width="1.8"/><path d="M1592.9,1664.5 L1592.9,1678.0" stroke="#ececec" stroke-width="1.8"/><path d="M1605.2,1515.0 L1605.2,1542.6" stroke="#ececec" stroke-width="1.8"/><path d="M1605.2,1555.7 L1605.2,1583.8" stroke="#ececec" stroke-width="1.8"/><path d="M1605.2,1609.5 L1605.2,1637.1" stroke="#ececec" stroke-width="1.8"/><path d="M1605.2,1650.4 L1605.2,1678.0" stroke="#ececec" stroke-width="1.8"/><path d="M1617.5,1515.0 L1617.5,1528.5" stroke="#ececec" stroke-width="1.8"/><path d="M1617.5,1555.7 L1617.5,1569.7" stroke="#ececec" stroke-width="1.8"/><path d="M1617.5,1623.6 L1617.5,1637.1" stroke="#ececec" stroke-width="1.8"/><path d="M1617.5,1664.5 L1617.5,1678.0" stroke="#ececec" stroke-width="1.8"/><path d="M1642.0,1515.0 L1642.0,1528.5" stroke="#ececec" stroke-width="1.8"/><path d="M1642.0,1555.7 L1642.0,1569.7" stroke="#ececec" stroke-width="1.8"/><path d="M1642.0,1623.6 L1642.0,1637.1" stroke="#ececec" stroke-width="1.8"/><path d="M1642.0,1664.5 L1642.0,1678.0" stroke="#ececec" stroke-width="1.8"/><path d="M1654.3,1515.0 L1654.3,1542.6" stroke="#ececec" stroke-width="1.8"/><path d="M1654.3,1555.7 L1654.3,1583.8" stroke="#ececec" stroke-width="1.8"/><path d="M1654.3,1609.5 L1654.3,1637.1" stroke="#ececec" stroke-width="1.8"/><path d="M1654.3,1650.4 L1654.3,1678.0" stroke="#ececec" stroke-width="1.8"/><path d="M1666.5,1515.0 L1666.5,1528.5" stroke="#ececec" stroke-width="1.8"/><path d="M1666.5,1555.7 L1666.5,1569.7" stroke="#ececec" stroke-width="1.8"/><path d="M1666.5,1623.6 L1666.5,1637.1" stroke="#ececec" stroke-width="1.8"/><path d="M1666.5,1664.5 L1666.5,1678.0" stroke="#ececec" stroke-width="1.8"/><path d="M1691.1,1515.0 L1691.1,1528.5" stroke="#ececec" stroke-width="1.8"/><path d="M1691.1,1555.7 L1691.1,1569.7" stroke="#ececec" stroke-width="1.8"/><path d="M1691.1,1623.6 L1691.1,1637.1" stroke="#ececec" stroke-width="1.8"/><path d="M1691.1,1664.5 L1691.1,1678.0" stroke="#ececec" stroke-width="1.8"/><path d="M1703.3,1515.0 L1703.3,1542.6" stroke="#ececec" stroke-width="1.8"/><path d="M1703.3,1555.7 L1703.3,1583.8" stroke="#ececec" stroke-width="1.8"/><path d="M1703.3,1609.5 L1703.3,1637.1" stroke="#ececec" stroke-width="1.8"/><path d="M1703.3,1650.4 L1703.3,1678.0" stroke="#ececec" stroke-width="1.8"/><path d="M1715.6,1515.0 L1715.6,1528.5" stroke="#ececec" stroke-width="1.8"/><path d="M1715.6,1555.7 L1715.6,1569.7" stroke="#ececec" stroke-width="1.8"/><path d="M1715.6,1623.6 L1715.6,1637.1" stroke="#ececec" stroke-width="1.8"/><path d="M1715.6,1664.5 L1715.6,1678.0" stroke="#ececec" stroke-width="1.8"/><path d="M1740.1,1515.0 L1740.1,1528.5" stroke="#ececec" stroke-width="1.8"/><path d="M1740.1,1555.7 L1740.1,1569.7" stroke="#ececec" stroke-width="1.8"/><path d="M1740.1,1623.6 L1740.1,1637.1" stroke="#ececec" stroke-width="1.8"/><path d="M1740.1,1664.5 L1740.1,1678.0" stroke="#ececec" stroke-width="1.8"/><path d="M1752.4,1515.0 L1752.4,1542.6" stroke="#ececec" stroke-width="1.8"/><path d="M1752.4,1555.7 L1752.4,1583.8" stroke="#ececec" stroke-width="1.8"/><path d="M1752.4,1609.5 L1752.4,1637.1" stroke="#ececec" stroke-width="1.8"/><path d="M1752.4,1650.4 L1752.4,1678.0" stroke="#ececec" stroke-width="1.8"/><path d="M1764.7,1515.0 L1764.7,1528.5" stroke="#ececec" stroke-width="1.8"/><path d="M1764.7,1555.7 L1764.7,1569.7" stroke="#ececec" stroke-width="1.8"/><path d="M1764.7,1623.6 L1764.7,1637.1" stroke="#ececec" stroke-width="1.8"/><path d="M1764.7,1664.5 L1764.7,1678.0" stroke="#ececec" stroke-width="1.8"/><path d="M1789.2,1515.0 L1789.2,1528.5" stroke="#ececec" stroke-width="1.8"/><path d="M1789.2,1555.7 L1789.2,1569.7" stroke="#ececec" stroke-width="1.8"/><path d="M1789.2,1623.6 L1789.2,1637.1" stroke="#ececec" stroke-width="1.8"/><path d="M1789.2,1664.5 L1789.2,1678.0" stroke="#ececec" stroke-width="1.8"/><path d="M1801.5,1515.0 L1801.5,1542.6" stroke="#ececec" stroke-width="1.8"/><path d="M1801.5,1555.7 L1801.5,1583.8" stroke="#ececec" stroke-width="1.8"/><path d="M1801.5,1609.5 L1801.5,1637.1" stroke="#ececec" stroke-width="1.8"/><path d="M1801.5,1650.4 L1801.5,1678.0" stroke="#ececec" stroke-width="1.8"/><path d="M1813.7,1515.0 L1813.7,1528.5" stroke="#ececec" stroke-width="1.8"/><path d="M1813.7,1555.7 L1813.7,1569.7" stroke="#ececec" stroke-width="1.8"/><path d="M1813.7,1623.6 L1813.7,1637.1" stroke="#ececec" stroke-width="1.8"/><path d="M1813.7,1664.5 L1813.7,1678.0" stroke="#ececec" stroke-width="1.8"/><path d="M1188.1,1535.5 L1188.1,1617 M1286.3,1617 L1286.3,1535.5" stroke="#b4b4b4" stroke-width="2.4"/><path d="M648.4,1535.5 L1188.1,1535.5 M1188.1,1617 L1286.3,1617 M1286.3,1535.5 L1826.0,1535.5" stroke="#767676" stroke-width="8.6"/></svg>
<div style="position:absolute;left:571.0px;top:1731.5px;width:1360.0px;height:2.0px;background:#e3e3e3"></div>
<svg style="position:absolute;left:566.0px;top:1729.0px;" width="10" height="12" viewBox="0 0 10 12" fill="none"><path d="M1.5,10 C2,5.5 4,3.5 6.5,3.5 L9,3.5" stroke="#e6e6e6" stroke-width="1.6"/></svg>
<div style="position:absolute;left:568.0px;top:1813.0px;width:1363.0px;height:2.0px;background:#cfcfcf"></div>
<div style="position:absolute;left:568.0px;top:1908.0px;width:1363.0px;height:2.0px;background:#e6e6e6"></div>
<div style="position:absolute;left:672.0px;top:1847.0px;width:59.0px;height:36.0px;background:#fff;border:2px solid #cdcdcd;border-radius:18px;box-sizing:border-box"></div>
<div style="position:absolute;left:672.0px;top:1940.0px;width:59.0px;height:36.0px;background:#238b3d;border-radius:18px"></div>
<div style="position:absolute;left:1932.5px;top:1700.0px;width:47.5px;height:280.0px;background:#f7f7f7"></div>
<div style="position:absolute;left:1930.5px;top:1350.0px;width:2.0px;height:630.0px;background:#d6d6d6"></div>
<div style="position:absolute;left:2030.0px;top:879.6px;width:542.0px;height:2.0px;background:#e6e6e6"></div>
<div style="position:absolute;left:2030.0px;top:1150.7px;width:542.0px;height:2.0px;background:#e6e6e6"></div>
<div style="position:absolute;left:2029.5px;top:1265.0px;width:542.0px;height:252.0px;background:#fff;border:2px solid #e0e0e0;border-radius:9px;box-sizing:border-box"></div>
<svg style="position:absolute;left:2436.0px;top:1470.0px;" width="30" height="30" viewBox="0 0 30 30" fill="none"><path d="M20,8.5 L20,19 L3.5,19 M7,15.5 L3.5,19 L7,22.5" stroke="#b5b5b5" stroke-width="2" stroke-linecap="round" stroke-linejoin="round"/></svg>
<div id="t0" style="position:absolute;top:261.12px;font-size:30.09px;line-height:30.09px;font-weight:400;color:#8e8e8e;white-space:nowrap;letter-spacing:-0.275px;left:223.50px;-webkit-text-stroke:0.45px #8e8e8e;"><span>Search</span></div>
<div id="t1" style="position:absolute;top:383.22px;font-size:30.09px;line-height:30.09px;font-weight:400;color:#8e8e8e;white-space:nowrap;letter-spacing:-0.295px;left:222.50px;-webkit-text-stroke:0.45px #8e8e8e;"><span>Fleet View</span></div>
<div id="t2" style="position:absolute;top:455.22px;font-size:30.09px;line-height:30.09px;font-weight:400;color:#8e8e8e;white-space:nowrap;letter-spacing:-0.146px;left:223.50px;-webkit-text-stroke:0.45px #8e8e8e;"><span>Safety</span></div>
<div id="t3" style="position:absolute;top:527.22px;font-size:30.09px;line-height:30.09px;font-weight:400;color:#0c8cf2;white-space:nowrap;letter-spacing:-0.333px;left:223.50px;-webkit-text-stroke:0.45px #0c8cf2;"><span>Compliance</span></div>
<div id="t4" style="position:absolute;top:599.22px;font-size:30.09px;line-height:30.09px;font-weight:400;color:#8e8e8e;white-space:nowrap;letter-spacing:-0.376px;left:222.50px;-webkit-text-stroke:0.45px #8e8e8e;"><span>Fuel</span></div>
<div id="t5" style="position:absolute;top:671.22px;font-size:30.09px;line-height:30.09px;font-weight:400;color:#8e8e8e;white-space:nowrap;letter-spacing:-0.473px;left:223.50px;-webkit-text-stroke:0.45px #8e8e8e;"><span>Cards</span></div>
<div id="t6" style="position:absolute;top:743.22px;font-size:30.09px;line-height:30.09px;font-weight:400;color:#8e8e8e;white-space:nowrap;letter-spacing:-0.100px;left:222.50px;-webkit-text-stroke:0.45px #8e8e8e;"><span>Maintenance</span></div>
<div id="t7" style="position:absolute;top:815.22px;font-size:30.09px;line-height:30.09px;font-weight:400;color:#8e8e8e;white-space:nowrap;letter-spacing:0.079px;left:224.50px;-webkit-text-stroke:0.45px #8e8e8e;"><span>Workforce</span></div>
<div id="t8" style="position:absolute;top:887.22px;font-size:30.09px;line-height:30.09px;font-weight:400;color:#8e8e8e;white-space:nowrap;letter-spacing:0.201px;left:222.50px;-webkit-text-stroke:0.45px #8e8e8e;"><span>Dispatch</span></div>
<div id="t9" style="position:absolute;top:1011.22px;font-size:30.09px;line-height:30.09px;font-weight:400;color:#8e8e8e;white-space:nowrap;letter-spacing:-0.022px;left:223.50px;-webkit-text-stroke:0.45px #8e8e8e;"><span>Coaching</span></div>
<div id="t10" style="position:absolute;top:1083.22px;font-size:30.09px;line-height:30.09px;font-weight:400;color:#8e8e8e;white-space:nowrap;letter-spacing:-0.035px;left:222.50px;-webkit-text-stroke:0.45px #8e8e8e;"><span>Messages</span></div>
<div id="t11" style="position:absolute;top:1155.22px;font-size:30.09px;line-height:30.09px;font-weight:400;color:#8e8e8e;white-space:nowrap;letter-spacing:0.052px;left:222.50px;-webkit-text-stroke:0.45px #8e8e8e;"><span>Documents</span></div>
<div id="t12" style="position:absolute;top:1226.72px;font-size:30.09px;line-height:30.09px;font-weight:400;color:#8e8e8e;white-space:nowrap;letter-spacing:0.048px;left:224.50px;-webkit-text-stroke:0.45px #8e8e8e;"><span>Analytics</span></div>
<div id="t13" style="position:absolute;top:1299.22px;font-size:30.09px;line-height:30.09px;font-weight:400;color:#8e8e8e;white-space:nowrap;letter-spacing:-0.163px;left:222.50px;-webkit-text-stroke:0.45px #8e8e8e;"><span>Reports</span></div>
<div id="t14" style="position:absolute;top:1371.22px;font-size:30.09px;line-height:30.09px;font-weight:400;color:#8e8e8e;white-space:nowrap;letter-spacing:0.077px;left:222.50px;-webkit-text-stroke:0.45px #8e8e8e;"><span>Devices</span></div>
<div id="t15" style="position:absolute;top:1443.22px;font-size:30.09px;line-height:30.09px;font-weight:400;color:#8e8e8e;white-space:nowrap;letter-spacing:0.170px;left:222.50px;-webkit-text-stroke:0.45px #8e8e8e;"><span>Marketplace</span></div>
<div id="t16" style="position:absolute;top:1228.15px;font-size:22.53px;line-height:22.53px;font-weight:700;color:#8a8a8a;white-space:nowrap;letter-spacing:0.000px;transform:scaleX(0.9086);transform-origin:left;left:387.59px;-webkit-text-stroke:0.4px #8a8a8a;"><span>NEW</span></div>
<div id="t17" style="position:absolute;top:1372.65px;font-size:22.53px;line-height:22.53px;font-weight:700;color:#8a8a8a;white-space:nowrap;letter-spacing:0.000px;transform:scaleX(0.9086);transform-origin:left;left:371.59px;-webkit-text-stroke:0.4px #8a8a8a;"><span>NEW</span></div>
<div id="t18" style="position:absolute;top:160.96px;font-size:38.52px;line-height:38.52px;font-weight:400;color:#666;white-space:nowrap;letter-spacing:-0.739px;left:571.50px;"><span>Compliance</span></div>
<div id="t19" style="position:absolute;top:160.96px;font-size:38.52px;line-height:38.52px;font-weight:400;color:#aaa;white-space:nowrap;letter-spacing:0.000px;left:784.50px;"><span>/</span></div>
<div id="t20" style="position:absolute;top:160.96px;font-size:38.52px;line-height:38.52px;font-weight:400;color:#666;white-space:nowrap;letter-spacing:-0.687px;left:810.50px;"><span>Logs</span></div>
<div id="t21" style="position:absolute;top:160.96px;font-size:38.52px;line-height:38.52px;font-weight:400;color:#aaa;white-space:nowrap;letter-spacing:0.000px;left:908.50px;"><span>/</span></div>
<div id="t22" style="position:absolute;top:160.96px;font-size:38.52px;line-height:38.52px;font-weight:400;color:#666;white-space:nowrap;letter-spacing:-1.140px;left:936.30px;"><span>Alex Smith</span></div>
<div id="t23" style="position:absolute;top:160.96px;font-size:38.52px;line-height:38.52px;font-weight:400;color:#aaa;white-space:nowrap;letter-spacing:0.000px;left:1125.50px;"><span>/</span></div>
<div id="t24" style="position:absolute;top:160.96px;font-size:38.52px;line-height:38.52px;font-weight:700;color:#111;white-space:nowrap;letter-spacing:0.000px;transform:scaleX(0.9591);transform-origin:left;left:1149.80px;"><span>Jan 13</span></div>
<div id="t25" style="position:absolute;top:164.56px;font-size:30.52px;line-height:30.52px;font-weight:400;color:#ababab;white-space:nowrap;letter-spacing:0.074px;left:1538.00px;"><span>Not coachable</span></div>
<div id="t26" style="position:absolute;top:164.56px;font-size:30.52px;line-height:30.52px;font-weight:700;color:#111;white-space:nowrap;letter-spacing:0.000px;transform:scaleX(0.9086);transform-origin:left;left:1856.78px;"><span>Edit</span></div>
<div id="t27" style="position:absolute;top:164.56px;font-size:30.52px;line-height:30.52px;font-weight:700;color:#111;white-space:nowrap;letter-spacing:0.000px;transform:scaleX(0.9390);transform-origin:left;left:1985.60px;"><span>View edit history</span></div>
<div id="t28" style="position:absolute;top:163.56px;font-size:30.52px;line-height:30.52px;font-weight:400;color:#333;white-space:nowrap;letter-spacing:0.000px;left:2432.20px;"><span>5</span></div>
<div id="t29" style="position:absolute;top:163.56px;font-size:30.52px;line-height:30.52px;font-weight:400;color:#b0b0b0;white-space:nowrap;letter-spacing:0.000px;left:2458.60px;"><span>/</span></div>
<div id="t30" style="position:absolute;top:163.56px;font-size:30.52px;line-height:30.52px;font-weight:400;color:#333;white-space:nowrap;letter-spacing:1.129px;left:2476.00px;"><span>121</span></div>
<div id="t31" style="position:absolute;top:315.84px;font-size:38.66px;line-height:38.66px;font-weight:700;color:#2a2a2a;white-space:nowrap;letter-spacing:0.000px;transform:scaleX(0.8865);transform-origin:left;left:600.93px;"><span>Form</span></div>
<div id="t32" style="position:absolute;top:426.96px;font-size:20.93px;line-height:20.93px;font-weight:400;color:#676767;white-space:nowrap;letter-spacing:0.000px;transform:scaleX(0.8917);transform-origin:left;left:599.11px;"><span>DRIVER</span></div>
<div id="t33" style="position:absolute;top:422.85px;font-size:29.94px;line-height:29.94px;font-weight:400;color:#454545;white-space:nowrap;letter-spacing:-0.470px;left:-783.82px;width:2000px;text-align:right;"><span>Alex Smith</span></div>
<div id="t34" style="position:absolute;top:426.96px;font-size:20.93px;line-height:20.93px;font-weight:400;color:#676767;white-space:nowrap;letter-spacing:0.000px;transform:scaleX(0.8913);transform-origin:left;left:1281.11px;"><span>CO - DRIVERS</span></div>
<div id="t35" style="position:absolute;top:533.61px;font-size:20.93px;line-height:20.93px;font-weight:400;color:#676767;white-space:nowrap;letter-spacing:0.000px;transform:scaleX(0.9548);transform-origin:left;left:600.00px;"><span>ASSET(S)</span></div>
<div id="t36" style="position:absolute;top:533.61px;font-size:20.93px;line-height:20.93px;font-weight:400;color:#676767;white-space:nowrap;letter-spacing:0.000px;transform:scaleX(0.9532);transform-origin:left;left:1282.00px;"><span>VEHICLE(S)</span></div>
<div id="t37" style="position:absolute;top:528.35px;font-size:29.94px;line-height:29.94px;font-weight:400;color:#1f66d3;white-space:nowrap;letter-spacing:0.000px;transform:scaleX(0.9398);transform-origin:right;left:-101.03px;width:2000px;text-align:right;"><span>DAK</span></div>
<div id="t38" style="position:absolute;top:640.61px;font-size:20.93px;line-height:20.93px;font-weight:400;color:#676767;white-space:nowrap;letter-spacing:0.000px;transform:scaleX(0.9489);transform-origin:left;left:599.05px;"><span>DISTANCE</span></div>
<div id="t39" style="position:absolute;top:634.05px;font-size:29.94px;line-height:29.94px;font-weight:400;color:#b2b2b2;white-space:nowrap;letter-spacing:-0.264px;left:941.00px;"><span>Odometers</span></div>
<div id="t40" style="position:absolute;top:635.55px;font-size:29.94px;line-height:29.94px;font-weight:400;color:#454545;white-space:nowrap;letter-spacing:0.759px;left:-782.59px;width:2000px;text-align:right;"><span>300 mi</span></div>
<div id="t41" style="position:absolute;top:638.91px;font-size:20.93px;line-height:20.93px;font-weight:400;color:#676767;white-space:nowrap;letter-spacing:0.000px;transform:scaleX(0.8963);transform-origin:left;left:1281.10px;"><span>CARRIER</span></div>
<div id="t42" style="position:absolute;top:634.55px;font-size:29.94px;line-height:29.94px;font-weight:400;color:#454545;white-space:nowrap;letter-spacing:0.081px;left:-98.98px;width:2000px;text-align:right;"><span>Product team</span></div>
<div id="t43" style="position:absolute;top:747.81px;font-size:20.93px;line-height:20.93px;font-weight:400;color:#676767;white-space:nowrap;letter-spacing:0.000px;transform:scaleX(0.9487);transform-origin:left;left:599.05px;"><span>MAIN OFFICE</span></div>
<div id="t44" style="position:absolute;top:742.95px;font-size:29.94px;line-height:29.94px;font-weight:400;color:#454545;white-space:nowrap;letter-spacing:-0.280px;left:-785.63px;width:2000px;text-align:right;"><span>296 Corona Ave , Alabama , AL</span></div>
<div id="t45" style="position:absolute;top:782.55px;font-size:29.94px;line-height:29.94px;font-weight:400;color:#454545;white-space:nowrap;letter-spacing:1.350px;left:-784.00px;width:2000px;text-align:right;"><span>35004</span></div>
<div id="t46" style="position:absolute;top:747.81px;font-size:20.93px;line-height:20.93px;font-weight:400;color:#676767;white-space:nowrap;letter-spacing:0.000px;transform:scaleX(0.9432);transform-origin:left;left:1281.06px;"><span>HOME</span></div>
<div id="t47" style="position:absolute;top:787.71px;font-size:20.93px;line-height:20.93px;font-weight:400;color:#676767;white-space:nowrap;letter-spacing:0.000px;transform:scaleX(0.9472);transform-origin:left;left:1282.00px;"><span>TERMINAL</span></div>
<div id="t48" style="position:absolute;top:893.21px;font-size:20.93px;line-height:20.93px;font-weight:400;color:#676767;white-space:nowrap;letter-spacing:0.000px;transform:scaleX(0.9601);transform-origin:left;left:599.04px;"><span>FROM</span></div>
<div id="t49" style="position:absolute;top:893.21px;font-size:20.93px;line-height:20.93px;font-weight:400;color:#676767;white-space:nowrap;letter-spacing:0.000px;transform:scaleX(0.9401);transform-origin:left;left:1282.00px;"><span>TO</span></div>
<div id="t50" style="position:absolute;top:998.71px;font-size:20.93px;line-height:20.93px;font-weight:400;color:#676767;white-space:nowrap;letter-spacing:0.000px;transform:scaleX(0.9412);transform-origin:left;left:600.00px;"><span>SHIPPING</span></div>
<div id="t51" style="position:absolute;top:1038.51px;font-size:20.93px;line-height:20.93px;font-weight:400;color:#676767;white-space:nowrap;letter-spacing:0.000px;transform:scaleX(0.9608);transform-origin:left;left:599.04px;"><span>DOCS</span></div>
<div id="t52" style="position:absolute;top:993.55px;font-size:29.94px;line-height:29.94px;font-weight:400;color:#454545;white-space:nowrap;letter-spacing:1.417px;left:-783.93px;width:2000px;text-align:right;"><span>7319</span></div>
<div id="t53" style="position:absolute;top:998.71px;font-size:20.93px;line-height:20.93px;font-weight:400;color:#676767;white-space:nowrap;letter-spacing:0.000px;transform:scaleX(0.9372);transform-origin:left;left:1281.06px;"><span>LOG FORM</span></div>
<div id="t54" style="position:absolute;top:1038.51px;font-size:20.93px;line-height:20.93px;font-weight:400;color:#676767;white-space:nowrap;letter-spacing:0.000px;transform:scaleX(0.9441);transform-origin:left;left:1281.06px;"><span>NOTES</span></div>
<div id="t55" style="position:absolute;top:1144.21px;font-size:20.93px;line-height:20.93px;font-weight:400;color:#676767;white-space:nowrap;letter-spacing:0.000px;transform:scaleX(0.9274);transform-origin:left;left:600.00px;"><span>SIGNATURE</span></div>
<div id="t56" style="position:absolute;top:1371.79px;font-size:38.37px;line-height:38.37px;font-weight:700;color:#2a2a2a;white-space:nowrap;letter-spacing:0.000px;transform:scaleX(0.9415);transform-origin:left;left:598.12px;"><span>Events</span></div>
<div id="t57" style="position:absolute;top:1489.34px;font-size:16.42px;line-height:16.42px;font-weight:700;color:#5c5c5c;white-space:nowrap;letter-spacing:0.000px;left:448.40px;width:400px;text-align:center;"><span>M</span></div>
<div id="t58" style="position:absolute;top:1489.34px;font-size:16.42px;line-height:16.42px;font-weight:700;color:#5c5c5c;white-space:nowrap;letter-spacing:0.000px;left:497.47px;width:400px;text-align:center;"><span>1</span></div>
<div id="t59" style="position:absolute;top:1489.34px;font-size:16.42px;line-height:16.42px;font-weight:700;color:#5c5c5c;white-space:nowrap;letter-spacing:0.000px;left:546.53px;width:400px;text-align:center;"><span>2</span></div>
<div id="t60" style="position:absolute;top:1489.34px;font-size:16.42px;line-height:16.42px;font-weight:700;color:#5c5c5c;white-space:nowrap;letter-spacing:0.000px;left:595.60px;width:400px;text-align:center;"><span>3</span></div>
<div id="t61" style="position:absolute;top:1489.34px;font-size:16.42px;line-height:16.42px;font-weight:700;color:#5c5c5c;white-space:nowrap;letter-spacing:0.000px;left:644.67px;width:400px;text-align:center;"><span>4</span></div>
<div id="t62" style="position:absolute;top:1489.34px;font-size:16.42px;line-height:16.42px;font-weight:700;color:#5c5c5c;white-space:nowrap;letter-spacing:0.000px;left:693.73px;width:400px;text-align:center;"><span>5</span></div>
<div id="t63" style="position:absolute;top:1489.34px;font-size:16.42px;line-height:16.42px;font-weight:700;color:#5c5c5c;white-space:nowrap;letter-spacing:0.000px;left:742.80px;width:400px;text-align:center;"><span>6</span></div>
<div id="t64" style="position:absolute;top:1489.34px;font-size:16.42px;line-height:16.42px;font-weight:700;color:#5c5c5c;white-space:nowrap;letter-spacing:0.000px;left:791.87px;width:400px;text-align:center;"><span>7</span></div>
<div id="t65" style="position:absolute;top:1489.34px;font-size:16.42px;line-height:16.42px;font-weight:700;color:#5c5c5c;white-space:nowrap;letter-spacing:0.000px;left:840.93px;width:400px;text-align:center;"><span>8</span></div>
<div id="t66" style="position:absolute;top:1489.34px;font-size:16.42px;line-height:16.42px;font-weight:700;color:#5c5c5c;white-space:nowrap;letter-spacing:0.000px;left:890.00px;width:400px;text-align:center;"><span>9</span></div>
<div id="t67" style="position:absolute;top:1489.34px;font-size:16.42px;line-height:16.42px;font-weight:700;color:#5c5c5c;white-space:nowrap;letter-spacing:0.000px;left:939.07px;width:400px;text-align:center;"><span>10</span></div>
<div id="t68" style="position:absolute;top:1489.34px;font-size:16.42px;line-height:16.42px;font-weight:700;color:#5c5c5c;white-space:nowrap;letter-spacing:0.000px;left:988.13px;width:400px;text-align:center;"><span>11</span></div>
<div id="t69" style="position:absolute;top:1489.34px;font-size:16.42px;line-height:16.42px;font-weight:700;color:#5c5c5c;white-space:nowrap;letter-spacing:0.000px;left:1037.20px;width:400px;text-align:center;"><span>N</span></div>
<div id="t70" style="position:absolute;top:1489.34px;font-size:16.42px;line-height:16.42px;font-weight:700;color:#5c5c5c;white-space:nowrap;letter-spacing:0.000px;left:1086.27px;width:400px;text-align:center;"><span>1</span></div>
<div id="t71" style="position:absolute;top:1489.34px;font-size:16.42px;line-height:16.42px;font-weight:700;color:#5c5c5c;white-space:nowrap;letter-spacing:0.000px;left:1135.33px;width:400px;text-align:center;"><span>2</span></div>
<div id="t72" style="position:absolute;top:1489.34px;font-size:16.42px;line-height:16.42px;font-weight:700;color:#5c5c5c;white-space:nowrap;letter-spacing:0.000px;left:1184.40px;width:400px;text-align:center;"><span>3</span></div>
<div id="t73" style="position:absolute;top:1489.34px;font-size:16.42px;line-height:16.42px;font-weight:700;color:#5c5c5c;white-space:nowrap;letter-spacing:0.000px;left:1233.47px;width:400px;text-align:center;"><span>4</span></div>
<div id="t74" style="position:absolute;top:1489.34px;font-size:16.42px;line-height:16.42px;font-weight:700;color:#5c5c5c;white-space:nowrap;letter-spacing:0.000px;left:1282.53px;width:400px;text-align:center;"><span>5</span></div>
<div id="t75" style="position:absolute;top:1489.34px;font-size:16.42px;line-height:16.42px;font-weight:700;color:#5c5c5c;white-space:nowrap;letter-spacing:0.000px;left:1331.60px;width:400px;text-align:center;"><span>6</span></div>
<div id="t76" style="position:absolute;top:1489.34px;font-size:16.42px;line-height:16.42px;font-weight:700;color:#5c5c5c;white-space:nowrap;letter-spacing:0.000px;left:1380.67px;width:400px;text-align:center;"><span>7</span></div>
<div id="t77" style="position:absolute;top:1489.34px;font-size:16.42px;line-height:16.42px;font-weight:700;color:#5c5c5c;white-space:nowrap;letter-spacing:0.000px;left:1429.73px;width:400px;text-align:center;"><span>8</span></div>
<div id="t78" style="position:absolute;top:1489.34px;font-size:16.42px;line-height:16.42px;font-weight:700;color:#5c5c5c;white-space:nowrap;letter-spacing:0.000px;left:1478.80px;width:400px;text-align:center;"><span>9</span></div>
<div id="t79" style="position:absolute;top:1489.34px;font-size:16.42px;line-height:16.42px;font-weight:700;color:#5c5c5c;white-space:nowrap;letter-spacing:0.000px;left:1527.87px;width:400px;text-align:center;"><span>10</span></div>
<div id="t80" style="position:absolute;top:1489.34px;font-size:16.42px;line-height:16.42px;font-weight:700;color:#5c5c5c;white-space:nowrap;letter-spacing:0.000px;left:1576.93px;width:400px;text-align:center;"><span>11</span></div>
<div id="t81" style="position:absolute;top:1489.34px;font-size:16.42px;line-height:16.42px;font-weight:700;color:#5c5c5c;white-space:nowrap;letter-spacing:0.000px;left:1626.00px;width:400px;text-align:center;"><span>M</span></div>
<div id="t82" style="position:absolute;top:1527.34px;font-size:16.42px;line-height:16.42px;font-weight:700;color:#5c5c5c;white-space:nowrap;letter-spacing:0.000px;transform:scaleX(0.8816);transform-origin:right;left:-1363.58px;width:2000px;text-align:right;"><span>OFF</span></div>
<div id="t83" style="position:absolute;top:1566.64px;font-size:16.42px;line-height:16.42px;font-weight:700;color:#5c5c5c;white-space:nowrap;letter-spacing:0.000px;transform:scaleX(0.8848);transform-origin:right;left:-1363.73px;width:2000px;text-align:right;"><span>SB</span></div>
<div id="t84" style="position:absolute;top:1608.94px;font-size:16.42px;line-height:16.42px;font-weight:700;color:#5c5c5c;white-space:nowrap;letter-spacing:0.000px;left:-1363.75px;width:2000px;text-align:right;"><span>D</span></div>
<div id="t85" style="position:absolute;top:1649.14px;font-size:16.42px;line-height:16.42px;font-weight:700;color:#5c5c5c;white-space:nowrap;letter-spacing:0.000px;transform:scaleX(0.9764);transform-origin:right;left:-1362.77px;width:2000px;text-align:right;"><span>ON</span></div>
<div id="t86" style="position:absolute;top:1526.74px;font-size:16.42px;line-height:16.42px;font-weight:700;color:#5c5c5c;white-space:nowrap;letter-spacing:0.000px;transform:scaleX(1.0628);transform-origin:left;left:1838.50px;"><span>22.00</span></div>
<div id="t87" style="position:absolute;top:1566.74px;font-size:16.42px;line-height:16.42px;font-weight:700;color:#5c5c5c;white-space:nowrap;letter-spacing:0.000px;transform:scaleX(1.0628);transform-origin:left;left:1838.50px;"><span>00.00</span></div>
<div id="t88" style="position:absolute;top:1608.04px;font-size:16.42px;line-height:16.42px;font-weight:700;color:#5c5c5c;white-space:nowrap;letter-spacing:0.000px;transform:scaleX(1.0628);transform-origin:left;left:1838.50px;"><span>02.00</span></div>
<div id="t89" style="position:absolute;top:1648.64px;font-size:16.42px;line-height:16.42px;font-weight:700;color:#5c5c5c;white-space:nowrap;letter-spacing:0.000px;transform:scaleX(1.0628);transform-origin:left;left:1838.50px;"><span>00.00</span></div>
<div id="t90" style="position:absolute;top:1761.06px;font-size:26.16px;line-height:26.16px;font-weight:700;color:#555;white-space:nowrap;letter-spacing:0.000px;transform:scaleX(0.9271);transform-origin:left;left:669.70px;"><span>Status</span></div>
<div id="t91" style="position:absolute;top:1761.06px;font-size:26.16px;line-height:26.16px;font-weight:700;color:#555;white-space:nowrap;letter-spacing:0.000px;transform:scaleX(0.9349);transform-origin:left;left:865.00px;"><span>Time (PST)</span></div>
<div id="t92" style="position:absolute;top:1761.06px;font-size:26.16px;line-height:26.16px;font-weight:700;color:#555;white-space:nowrap;letter-spacing:0.000px;transform:scaleX(0.9351);transform-origin:left;left:1132.86px;"><span>Duration</span></div>
<div id="t93" style="position:absolute;top:1761.06px;font-size:26.16px;line-height:26.16px;font-weight:700;color:#555;white-space:nowrap;letter-spacing:0.000px;transform:scaleX(0.9271);transform-origin:left;left:1508.67px;"><span>Location</span></div>
<div id="t94" style="position:absolute;top:1761.06px;font-size:26.16px;line-height:26.16px;font-weight:700;color:#555;white-space:nowrap;letter-spacing:0.000px;transform:scaleX(0.9501);transform-origin:left;left:1792.55px;"><span>CMV</span></div>
<div id="t95" style="position:absolute;top:1853.64px;font-size:21.37px;line-height:21.37px;font-weight:700;color:#3a3a3a;white-space:nowrap;letter-spacing:0.000px;transform:scaleX(0.9048);transform-origin:center;left:501.50px;width:400px;text-align:center;"><span>OFF</span></div>
<div id="t96" style="position:absolute;top:1844.98px;font-size:30.96px;line-height:30.96px;font-weight:400;color:#454545;white-space:nowrap;letter-spacing:0.000px;transform:scaleX(1.0126);transform-origin:left;left:803.97px;"><span>12:00:00 AM</span></div>
<div id="t97" style="position:absolute;top:1844.98px;font-size:30.96px;line-height:30.96px;font-weight:400;color:#454545;white-space:nowrap;letter-spacing:1.634px;left:-778.15px;width:2000px;text-align:right;"><span>11h</span></div>
<div id="t98" style="position:absolute;top:1946.47px;font-size:21.80px;line-height:21.80px;font-weight:700;color:#fff;white-space:nowrap;letter-spacing:0.000px;left:501.50px;width:400px;text-align:center;"><span>D</span></div>
<div id="t99" style="position:absolute;top:1939.68px;font-size:30.96px;line-height:30.96px;font-weight:400;color:#454545;white-space:nowrap;letter-spacing:0.000px;transform:scaleX(1.0264);transform-origin:left;left:803.95px;"><span>11:00:00 AM</span></div>
<div id="t100" style="position:absolute;top:1939.68px;font-size:30.96px;line-height:30.96px;font-weight:400;color:#454545;white-space:nowrap;letter-spacing:-1.215px;left:-781.00px;width:2000px;text-align:right;"><span>2h</span></div>
<div id="t101" style="position:absolute;top:1938.68px;font-size:30.96px;line-height:30.96px;font-weight:400;color:#454545;white-space:nowrap;letter-spacing:0.000px;left:1909.00px;"><span>D</span></div>
<div id="t102" style="position:absolute;top:272.76px;font-size:38.52px;line-height:38.52px;font-weight:700;color:#2a2a2a;white-space:nowrap;letter-spacing:0.000px;transform:scaleX(0.9424);transform-origin:left;left:2029.52px;"><span>Details</span></div>
<div id="t103" style="position:absolute;top:353.91px;font-size:20.93px;line-height:20.93px;font-weight:400;color:#676767;white-space:nowrap;letter-spacing:0.000px;transform:scaleX(0.8802);transform-origin:left;left:2029.12px;"><span>DRIVER</span></div>
<div id="t104" style="position:absolute;top:389.42px;font-size:29.51px;line-height:29.51px;font-weight:400;color:#1f66d3;white-space:nowrap;letter-spacing:-0.420px;left:2030.00px;"><span>Alex Smith</span></div>
<div id="t105" style="position:absolute;top:465.21px;font-size:20.93px;line-height:20.93px;font-weight:400;color:#676767;white-space:nowrap;letter-spacing:0.000px;transform:scaleX(0.8977);transform-origin:left;left:2029.10px;"><span>DRIVER GROUP</span></div>
<div id="t106" style="position:absolute;top:537.01px;font-size:20.93px;line-height:20.93px;font-weight:400;color:#676767;white-space:nowrap;letter-spacing:0.000px;transform:scaleX(0.9162);transform-origin:left;left:2029.08px;"><span>HOURS WORKED</span></div>
<div id="t107" style="position:absolute;top:573.42px;font-size:29.51px;line-height:29.51px;font-weight:400;color:#222;white-space:nowrap;letter-spacing:0.292px;left:2029.00px;"><span>2 hrs</span></div>
<div id="t108" style="position:absolute;top:649.81px;font-size:20.93px;line-height:20.93px;font-weight:400;color:#676767;white-space:nowrap;letter-spacing:0.000px;transform:scaleX(0.9078);transform-origin:left;left:2029.09px;"><span>CYCLE RULE</span></div>
<div id="t109" style="position:absolute;top:684.82px;font-size:29.51px;line-height:29.51px;font-weight:400;color:#1f66d3;white-space:nowrap;letter-spacing:0.037px;left:2028.00px;"><span>USA Property 60 hour / 7 day</span></div>
<div id="t110" style="position:absolute;top:762.21px;font-size:20.93px;line-height:20.93px;font-weight:400;color:#676767;white-space:nowrap;letter-spacing:0.000px;transform:scaleX(0.9248);transform-origin:left;left:2030.00px;"><span>VEHICLE(S)</span></div>
<div id="t111" style="position:absolute;top:796.82px;font-size:29.51px;line-height:29.51px;font-weight:400;color:#1f66d3;white-space:nowrap;letter-spacing:0.000px;transform:scaleX(0.9274);transform-origin:left;left:2028.15px;"><span>DAK</span></div>
<div id="t112" style="position:absolute;top:930.84px;font-size:38.66px;line-height:38.66px;font-weight:700;color:#2a2a2a;white-space:nowrap;letter-spacing:0.000px;transform:scaleX(0.9131);transform-origin:left;left:2029.59px;"><span>Quick Links</span></div>
<div id="t113" style="position:absolute;top:999.32px;font-size:29.51px;line-height:29.51px;font-weight:400;color:#1f66d3;white-space:nowrap;letter-spacing:-0.151px;left:2028.00px;"><span>Log Audit Detail Report</span></div>
<div id="t114" style="position:absolute;top:1067.32px;font-size:29.51px;line-height:29.51px;font-weight:400;color:#1f66d3;white-space:nowrap;letter-spacing:-0.243px;left:2028.00px;"><span>Logs Detail Report</span></div>
<div id="t115" style="position:absolute;top:1200.44px;font-size:38.66px;line-height:38.66px;font-weight:700;color:#2a2a2a;white-space:nowrap;letter-spacing:0.000px;transform:scaleX(0.9625);transform-origin:left;left:2028.58px;"><span>Notes</span></div>
<div id="t116" style="position:absolute;top:1290.35px;font-size:29.94px;line-height:29.94px;font-weight:400;color:#8a8a8a;white-space:nowrap;letter-spacing:-0.171px;left:2064.00px;"><span>Add a note...</span></div>
<div id="t117" style="position:absolute;top:1470.70px;font-size:24.71px;line-height:24.71px;font-weight:400;color:#adadad;white-space:nowrap;letter-spacing:-0.079px;left:2372.00px;"><span>Enter</span></div>
<div id="t118" style="position:absolute;top:1470.70px;font-size:24.71px;line-height:24.71px;font-weight:400;color:#adadad;white-space:nowrap;letter-spacing:-0.055px;left:2463.00px;"><span>to Save</span></div>
</div></div></body></html>
